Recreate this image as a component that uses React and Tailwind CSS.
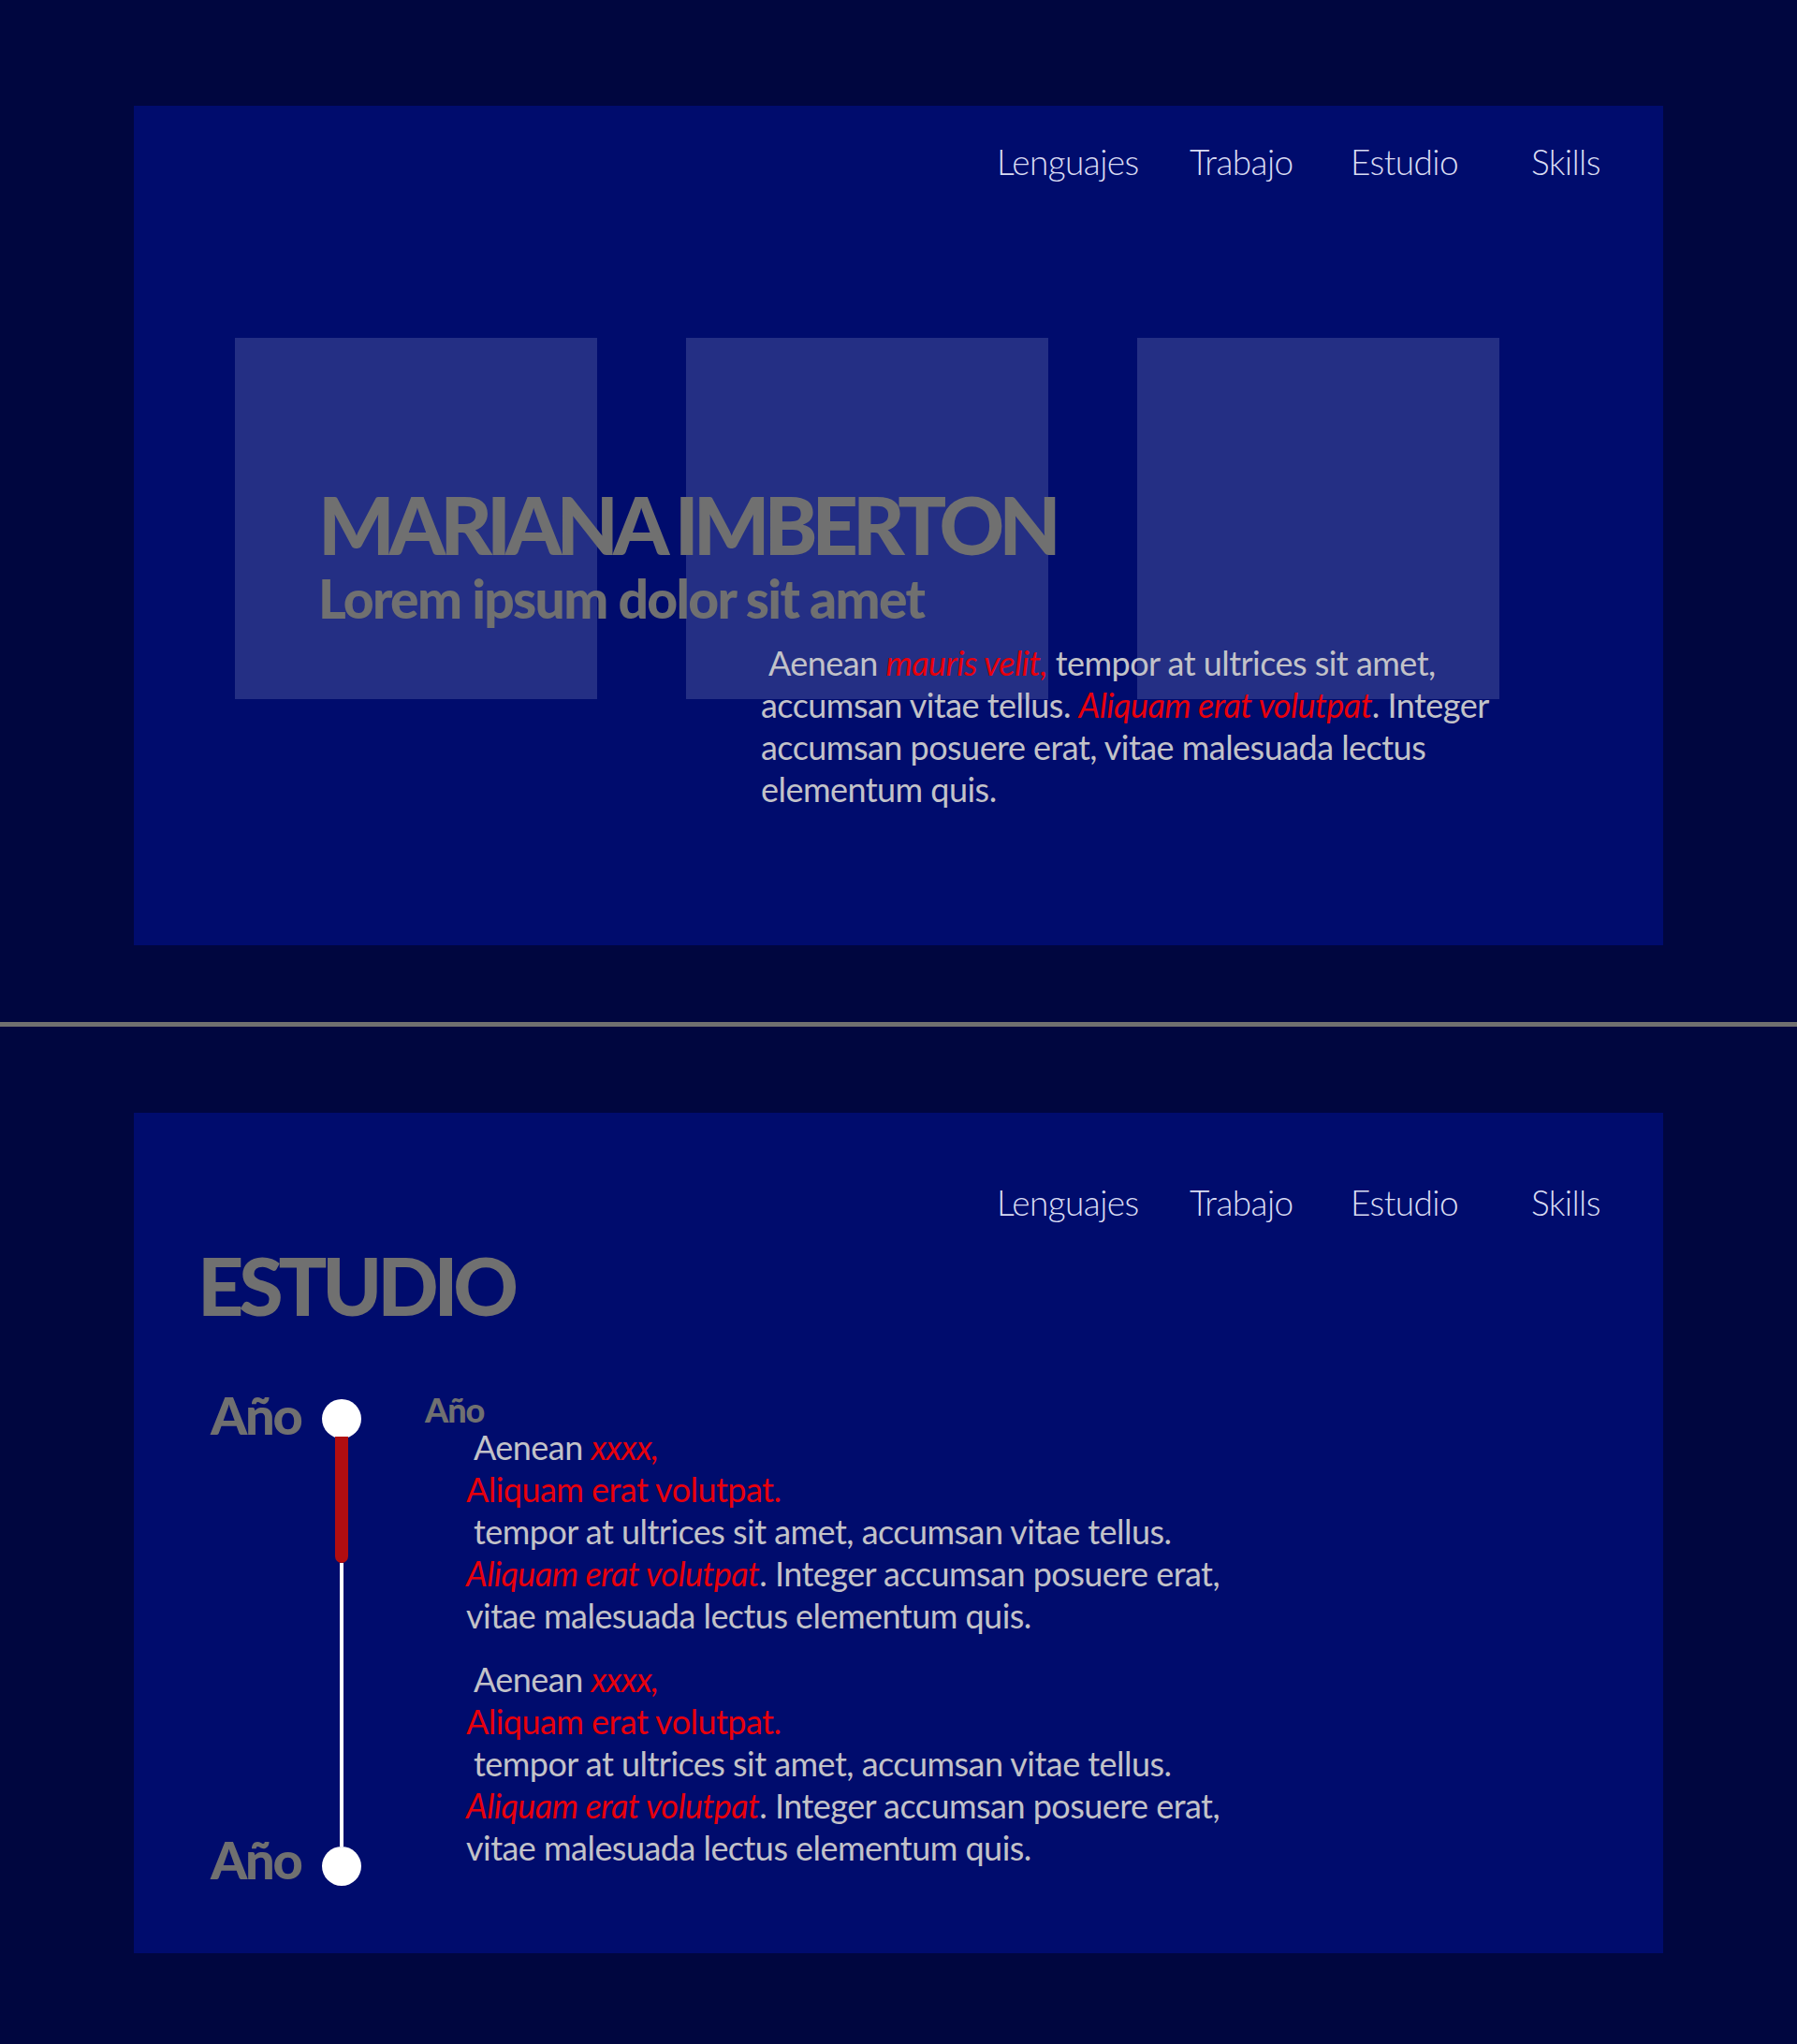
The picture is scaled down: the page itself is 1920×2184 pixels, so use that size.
const navItems = [
  { label: "Lenguajes", width: "w-[206px]" },
  { label: "Trabajo", width: "w-[172px]" },
  { label: "Estudio", width: "w-[193px]" },
  { label: "Skills", width: "" },
];

function Nav({ className = "" }) {
  return (
    <nav className={`flex pl-[922px] ${className}`}>
      {navItems.map((item) => (
        <a
          key={item.label}
          className={`${item.width} text-[37px] font-light leading-[40px] tracking-[-0.016em] text-[#d9dcf3]`}
          href="#"
        >
          {item.label}
        </a>
      ))}
    </nav>
  );
}

function Red({ children, italic = true }) {
  return (
    <span className={`text-[#e8000b] ${italic ? "italic" : ""}`}>
      {children}
    </span>
  );
}

function StudyBlock({ className = "" }) {
  return (
    <div
      className={`text-[36px] leading-[45px] tracking-[-0.015em] text-[#c2c2c8] ${className}`}
    >
      <p className="indent-[8px]">
        Aenean <Red>xxxx,</Red>
      </p>
      <p>
        <Red italic={false}>Aliquam erat volutpat.</Red>
      </p>
      <p className="indent-[8px]">
        tempor at ultrices sit amet, accumsan vitae tellus.
      </p>
      <p className="w-[840px]">
        <Red>Aliquam erat volutpat</Red>. Integer accumsan posuere erat, vitae
        malesuada lectus elementum quis.
      </p>
    </div>
  );
}

export default function App() {
  return (
    <main className="min-h-screen bg-[#00063f] pt-[113px] pb-[97px] font-['Lato','Open_Sans',sans-serif]">
      <section className="mx-[143px] h-[897px] bg-[#000c6d]">
        <Nav className="pt-[40px]" />

        <div className="mt-[168px] grid">
          <div className="flex gap-[95px] pl-[108px] [grid-area:1/1]">
            <div className="h-[386px] w-[387px] bg-[#242f84]" />
            <div className="h-[386px] w-[387px] bg-[#242f84]" />
            <div className="h-[386px] w-[387px] bg-[#242f84]" />
          </div>

          <div className="pl-[197px] pt-[156px] [grid-area:1/1]">
            <h1 className="text-[86px] font-black leading-none tracking-[-0.07em] text-[#707070]">
              MARIANA IMBERTON
            </h1>
            <h2 className="mt-[8px] text-[57px] font-black leading-none tracking-[-0.03em] text-[#707070]">
              Lorem ipsum dolor sit amet
            </h2>
            <p className="ml-[473px] mt-[18px] w-[805px] text-[36px] leading-[45px] tracking-[-0.015em] text-[#c2c2c8]">
              <span className="ml-[8px]">Aenean</span>{" "}
              <Red>mauris velit,</Red> tempor at ultrices sit amet, accumsan
              vitae tellus. <Red>Aliquam erat volutpat</Red>. Integer accumsan
              posuere erat, vitae malesuada lectus elementum quis.
            </p>
          </div>
        </div>
      </section>

      <hr className="mt-[82px] h-[5px] border-0 bg-[#707070]" />

      <section className="mx-[143px] mt-[92px] h-[898px] bg-[#000c6d]">
        <Nav className="pt-[76px]" />

        <h1 className="mt-[25px] pl-[68px] text-[86px] font-black leading-none tracking-[-0.06em] text-[#707070]">
          ESTUDIO
        </h1>

        <div className="mt-[79px] flex pl-[82px]">
          <div className="flex h-[520px] w-[119px] flex-col justify-between text-[56px] font-black leading-none tracking-[-0.04em] text-[#707070]">
            <span className="-mt-[11px]">Año</span>
            <span>Año</span>
          </div>

          <div className="flex h-[520px] w-[42px] flex-col items-center">
            <div className="h-[42px] w-[42px] shrink-0 rounded-full bg-white" />
            <div className="-mt-[2px] h-[135px] w-[14px] shrink-0 rounded-b-full bg-[#b10d10]" />
            <div className="w-[4px] flex-1 bg-white" />
            <div className="h-[42px] w-[42px] shrink-0 rounded-full bg-white" />
          </div>

          <div className="ml-[68px] -mt-[7px]">
            <h3 className="text-[36px] font-black leading-none tracking-[-0.03em] text-[#707070]">
              Año
            </h3>
            <StudyBlock className="pl-[44px]" />
            <StudyBlock className="mt-[23px] pl-[44px]" />
          </div>
        </div>
      </section>
    </main>
  );
}
